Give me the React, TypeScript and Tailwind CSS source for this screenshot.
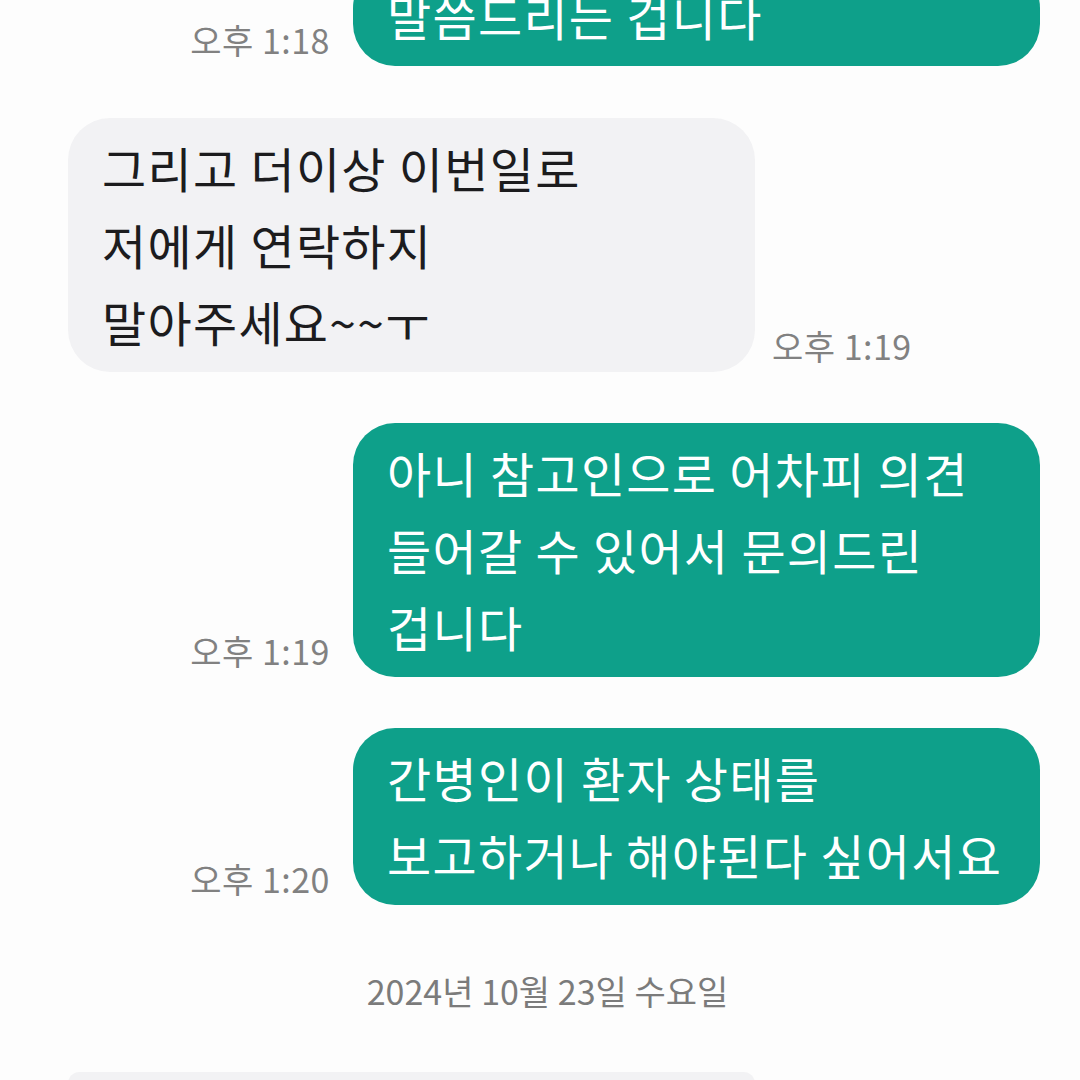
import React from 'react';

const font = { fontFamily: '"Noto Sans CJK KR", "Noto Sans", sans-serif' };

const Time = ({ t }: { t: string }) => (
  <span className="text-[34px] leading-[40px] tracking-[0.5px] text-[#818181] whitespace-nowrap mb-[6px]">{t}</span>
);

const Bubble = ({ lines, mine }: { lines: string[]; mine?: boolean }) => (
  <div
    className={`w-[687px] rounded-[42px] px-[34px] pt-[11px] pb-[12px] text-[48px] tracking-[1.3px] leading-[77px] ${
      mine ? 'bg-[#0ea08a] text-white' : 'bg-[#f2f2f4] text-[#1c1c1e]'
    }`}
  >
    {lines.map((l, i) => (
      <div key={i} className="whitespace-nowrap">{l}</div>
    ))}
  </div>
);

const Mine = ({ lines, t, className }: { lines: string[]; t: string; className: string }) => (
  <div className={`flex items-end justify-end gap-[23px] pr-[40px] ${className}`}>
    <Time t={t} />
    <Bubble lines={lines} mine />
  </div>
);

export default function App() {
  return (
    <div className="w-[1080px] h-[1080px] overflow-hidden bg-[#fdfdfd] flex flex-col" style={font}>
      <Mine className="-mt-[34px]" t="오후 1:18" lines={['말씀드리는 겁니다']} />

      <div className="flex items-end gap-[17px] pl-[68px] mt-[52px]">
        <Bubble lines={['그리고 더이상 이번일로', '저에게 연락하지', '말아주세요~~ㅜ']} />
        <Time t="오후 1:19" />
      </div>

      <Mine
        className="mt-[51px]"
        t="오후 1:19"
        lines={['아니 참고인으로 어차피 의견', '들어갈 수 있어서 문의드린', '겁니다']}
      />

      <Mine className="mt-[51px]" t="오후 1:20" lines={['간병인이 환자 상태를', '보고하거나 해야된다 싶어서요']} />

      <div className="mt-[66px] pl-[15px] text-center text-[34px] leading-[40px] text-[#7b7b7b]">
        2024년 10월 23일 수요일
      </div>

      <div className="pl-[68px] mt-[61px]">
        <Bubble lines={['', '']} />
      </div>
    </div>
  );
}
